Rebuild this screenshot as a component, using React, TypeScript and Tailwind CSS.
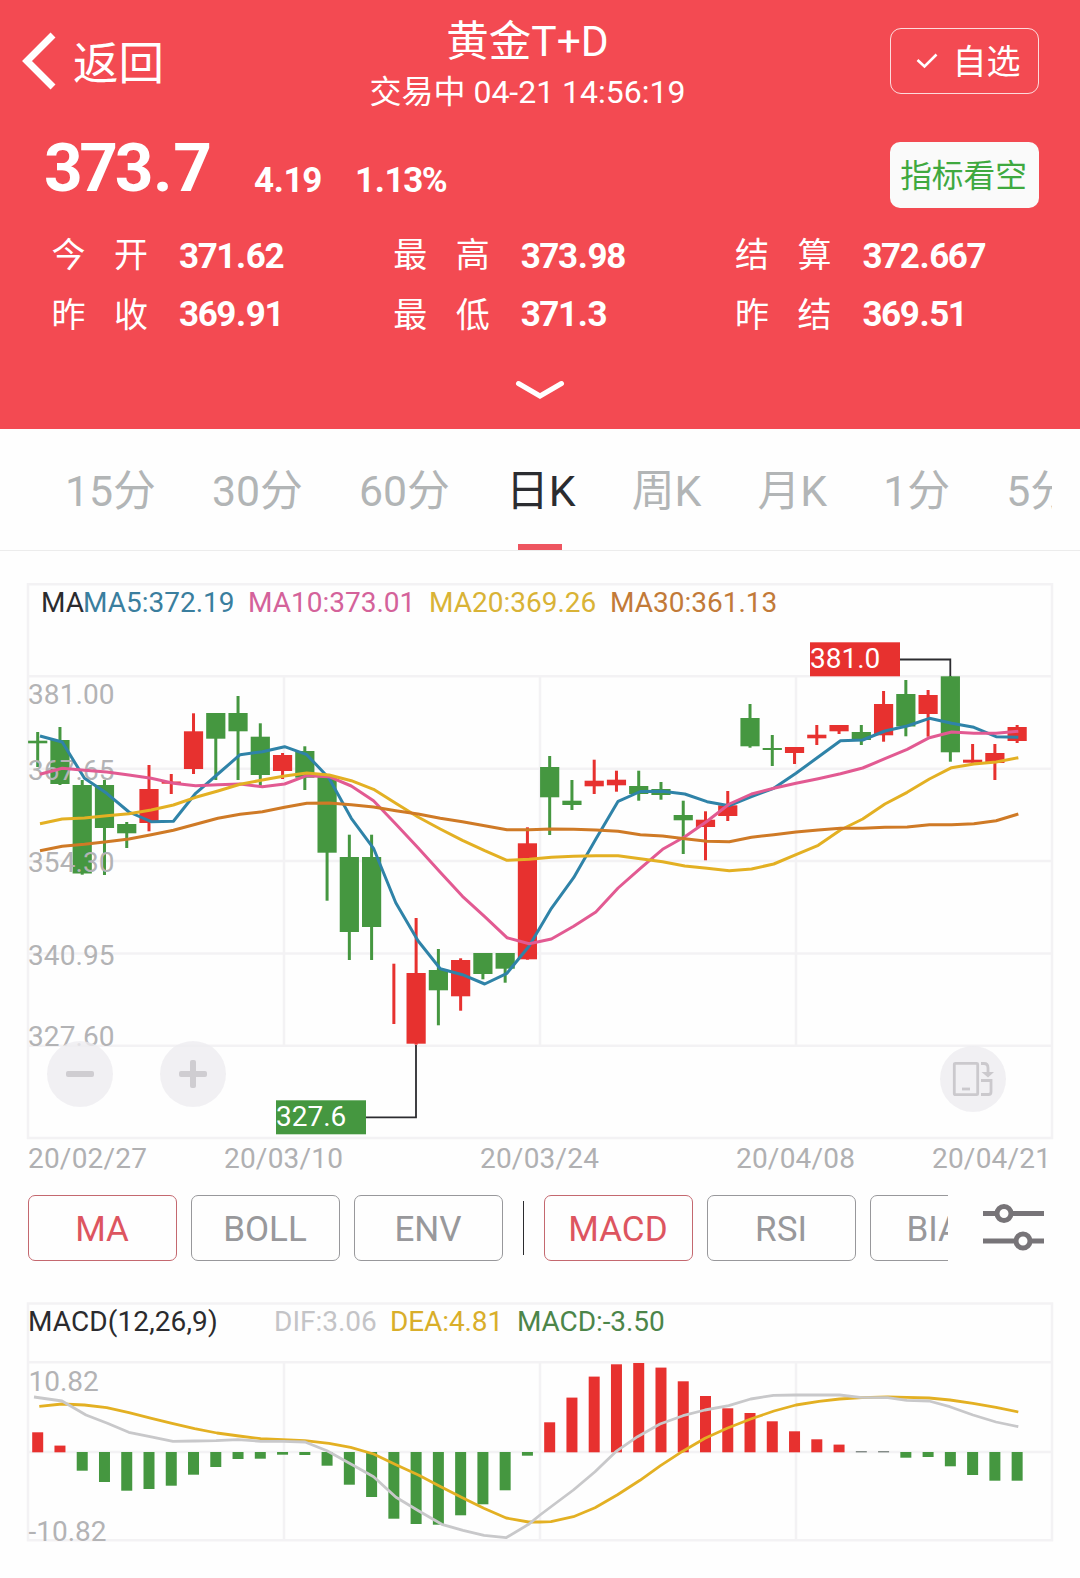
import React from "react";
import clsx from "clsx";

const RED = "#e7312f";
const GREEN = "#459740";

// [up, bodyTop, bodyBottom, wickTop, wickBottom], in chart units
type Candle = [0 | 1, number, number, number, number];

const candles: Candle[] = [
  [0, 740.7, 743.3, 732, 767],
  [0, 740, 784, 727, 785],
  [0, 785, 873.5, 780, 874.7],
  [0, 785, 828, 780, 875],
  [0, 824, 833.3, 822, 848],
  [1, 789, 823, 765, 831.3],
  [1, 781.5, 783.7, 774, 794],
  [1, 731.3, 769, 713.3, 774],
  [0, 713, 738.7, 713, 780],
  [0, 713, 731.3, 696, 780],
  [0, 736.7, 775, 723.3, 786],
  [1, 755, 771, 753, 779],
  [0, 751, 777.7, 746.3, 790],
  [0, 776.7, 852.7, 776.7, 900.7],
  [0, 857, 932, 834.7, 960],
  [0, 857, 927, 834.7, 960],
  [1, 1024, 1024, 963.7, 1024],
  [1, 973, 1043.7, 918, 1044.7],
  [0, 970, 990.3, 949, 1025.3],
  [1, 960, 996.3, 958.3, 1010.7],
  [0, 953, 974, 953, 979.3],
  [0, 953, 968.7, 953, 982.7],
  [1, 843.3, 959.3, 827.3, 959.7],
  [0, 767, 797.3, 756, 835],
  [0, 800.7, 805, 780, 810],
  [1, 780.7, 786.3, 759.7, 794],
  [1, 779.7, 785.3, 770.7, 791.7],
  [0, 786, 794, 770.7, 800.7],
  [0, 789, 795, 782, 799.7],
  [0, 815, 820.3, 800.7, 854],
  [1, 819.7, 827, 811.3, 860.3],
  [1, 805.3, 816, 791, 821],
  [0, 718, 746.3, 704, 747.7],
  [0, 748, 750, 735, 766],
  [1, 747, 753, 747, 764],
  [1, 734.7, 738.3, 725, 745],
  [1, 725, 731.3, 725, 734],
  [0, 732, 740, 725, 745],
  [1, 704, 735.3, 691, 741.7],
  [0, 694, 726.5, 680, 736.3],
  [1, 695, 714, 690, 736.7],
  [0, 676.3, 752.3, 676, 761.7],
  [1, 759.7, 762.7, 744, 762.7],
  [1, 753, 763, 744, 780],
  [1, 727, 741, 725, 743],
];

const ma5 = [
  736, 742, 778.3, 793.3, 812, 821.7, 821.3, 793.3, 774, 754.7, 751.7, 746.7,
  754.7, 778.3, 818.3, 848.3, 902.7, 940.7, 968.7, 974.7, 984, 973.3, 946,
  908.3, 877.7, 839, 801.3, 791.5, 791.3, 794, 801.7, 805.7, 796.7, 788.3,
  773.3, 757, 740.7, 740, 731, 726, 718.3, 723.3, 727.3, 736.7, 737.3,
];
const ma10 = [
  774.3, 768.3, 770.3, 772, 775, 778.3, 783.3, 785.7, 784.7, 784, 786.7, 784,
  775.7, 776.7, 786, 800.7, 824, 847.7, 872.3, 896.3, 916.7, 937.7, 943.7, 939,
  926.3, 912, 888, 868.3, 849.3, 836.7, 821.3, 804, 794, 788.3, 783.3, 778.7,
  773.7, 768, 758.7, 749.3, 737.7, 732, 733.3, 733.3, 731.3,
];
const ma20 = [
  823.7, 819, 818, 815.7, 813.7, 810, 805, 797.3, 791, 784.3, 780, 776, 773,
  775, 780.7, 789.3, 803.3, 817, 829, 840.3, 850.7, 860.3, 859.3, 857.3, 856.3,
  855.7, 855.7, 858.7, 861.7, 866, 868.3, 870.7, 869, 864, 854.7, 845.3, 830,
  819, 804, 792.3, 779, 767.7, 764, 762, 757.7,
];
const ma30 = [
  850.7, 846.3, 844.3, 841.7, 839, 834.7, 830.3, 824.3, 818.3, 814.3, 811.7,
  807.3, 803.3, 803, 804.7, 807, 810.7, 814, 818.3, 821.7, 825.7, 829.7, 829.7,
  829, 829.3, 830, 831.3, 834.7, 836, 838.7, 841.3, 841.7, 837.3, 834.7, 832,
  830, 828.3, 828.3, 827.3, 827, 824.7, 824.7, 823.7, 820.7, 814,
];

// positive grows upwards from the zero line
const macdBars = [
  20, 6.7, -18.7, -30, -38.7, -37, -33.7, -22.7, -15, -7, -6.7, -2.7, -3,
  -13.7, -32.7, -45, -66.7, -72, -72.7, -63.3, -52.3, -38.3, -3.7, 30, 54.7,
  75.7, 88, 89.3, 84.7, 71, 56.3, 44, 39.3, 31, 21, 13, 7.7, 0, 0, -5.7, -5,
  -14.3, -23, -28.7, -28.7,
];

const dif =
  "34,1397 62,1401 86,1415 107.4,1423.3 128.8,1432.3 150,1436.7 173,1441.3 194.6,1441 216,1440.7 238,1439.7 260.7,1441.3 283,1441.3 305,1442 327,1450.7 349.5,1463.3 373.6,1476.7 396,1497.3 418.4,1510.7 441.8,1524.3 463,1530.3 484,1535.3 506,1537.7 528.6,1524.3 540,1515 552,1506 573.4,1490 595,1471.7 615.8,1451.7 637.5,1436.7 660,1424 683,1415.7 705,1410 728.7,1405.7 750.7,1399 773.5,1395.3 796,1395 839.6,1395 860,1397.3 887.8,1397.7 906.7,1400.3 929,1401 949.8,1406.7 973,1415 996,1422 1018.3,1426.7";
const dea =
  "39.3,1406.3 62,1404 84.4,1405 106.7,1407.7 129,1412.7 151.5,1418.3 172,1423.3 194.6,1428.7 217,1433 239,1436 260.7,1438.7 304.8,1440.7 329,1443.3 350.6,1447.3 373.6,1454 396,1464.7 418.4,1475 440.8,1486.7 461.4,1497.3 483.8,1508.3 506.2,1518 528.6,1522 540,1522 551,1521.7 573.4,1516.7 595,1507.7 617.5,1494.7 640,1480.3 660.5,1465.7 682,1451.7 705,1438.3 727.7,1428 750.7,1419 774,1411 796,1405 819,1401.3 839.6,1399 862,1397.7 887.8,1397 906.7,1397.3 929,1398 950,1400 973,1403.3 996,1407.3 1018.3,1412";

const candleX = (i: number) => 37.7 + i * 22.26;
const linePoints = (ys: number[]) =>
  ys.map((y, i) => `${40 + i * 22.235},${y}`).join(" ");

// Price figures: the decimal point gets more room than the font gives it
const Num: React.FC<{ value: string; big?: boolean }> = ({ value, big }) => {
  const [whole, rest] = value.split(".");
  return (
    <span
      className={clsx(
        "font-bold leading-none",
        big ? "text-[67.5px] tracking-[-3.4px]" : "text-[35px] tracking-[-1.4px]"
      )}
    >
      {whole}
      <span className={big ? "ml-[3px] mr-[4px]" : "ml-[1px] mr-[1px]"}>
        .
      </span>
      {rest}
    </span>
  );
};

const quotes = [
  ["今", "开", "371.62"],
  ["最", "高", "373.98"],
  ["结", "算", "372.667"],
  ["昨", "收", "369.91"],
  ["最", "低", "371.3"],
  ["昨", "结", "369.51"],
];

const Header: React.FC = () => (
  <header className="h-[429px] bg-[#f34a52] text-white overflow-hidden">
    <div className="flex h-[125px] items-start">
      <div className="flex w-[340px] pl-[21px] pt-[31px]">
        <svg width="36" height="60" viewBox="0 0 36 60" fill="none">
          <path d="M32 4 L6 30 L32 56" stroke="#fff" strokeWidth="7" />
        </svg>
        <span className="ml-[16px] mt-[11px] text-[45.5px] leading-[46px]">
          返回
        </span>
      </div>
      <div className="flex w-[375px] flex-col items-center pt-[19px]">
        <h1 className="text-[42.5px] leading-[46px]">黄金T+D</h1>
        <p className="mt-[9px] whitespace-nowrap text-[32px] leading-[36px]">
          交易中 04-21 14:56:19
        </p>
      </div>
      <div className="ml-[175px] mt-[28px] flex h-[66px] w-[149px] items-center rounded-[11px] border border-white/80 pl-[25px]">
        <svg width="22" height="16" viewBox="0 0 22 16" fill="none">
          <path d="M1.5 7 L8.5 13.5 L20.5 1.5" stroke="#fff" strokeWidth="2.6" />
        </svg>
        <span className="ml-[14.5px] mt-px text-[34px] leading-none">
          自选
        </span>
      </div>
    </div>
    <div className="flex h-[92px] items-start">
      <div className="flex h-[78px] w-[890px] items-end pl-[44px]">
        <div className="mb-[2px] flex w-[210px]">
          <Num value="373.7" big />
        </div>
        <div className="mb-[5px] flex w-[101px]">
          <Num value="4.19" />
        </div>
        <div className="mb-[5px] flex">
          <Num value="1.13%" />
        </div>
      </div>
      <div className="mt-[17px] flex h-[66px] w-[149px] items-center justify-center rounded-[10px] bg-[#fafafa] pr-[2px] pt-[4px] text-[31.7px] leading-none text-[#3fa93f]">
        指标看空
      </div>
    </div>
    <div className="grid grid-cols-[341.7px_341.7px_341.7px] gap-y-[18px] pl-[51.5px] pt-[17px]">
      {quotes.map(([a, b, value], i) => (
        <div key={i} className="flex h-[42px] items-center text-[34px]">
          <span className="w-[62.5px] leading-none">{a}</span>
          <span className="w-[65px] leading-none">{b}</span>
          <span className={clsx("flex", i < 3 ? "pt-[2px]" : "pb-[2px]")}>
            <Num value={value} />
          </span>
        </div>
      ))}
    </div>
    <div className="flex justify-center pt-[44px]">
      <svg width="50" height="22" viewBox="0 0 50 22" fill="none">
        <path
          d="M3.5 3.5 L25 16 L46.5 3.5"
          stroke="#fff"
          strokeWidth="5"
          strokeLinecap="round"
        />
      </svg>
    </div>
  </header>
);

const tabs = ["15分", "30分", "60分", "日K", "周K", "月K", "1分", "5分"];

const Tabs: React.FC = () => (
  <nav className="h-[122px] border-b border-[#ececec] pr-[28px]">
    <div className="flex h-full gap-[56.1px] overflow-hidden pl-[65px] text-[42.8px] text-[#b2b5b6]">
      {tabs.map((tab) => (
        <div
          key={tab}
          className={clsx(
            "flex h-full shrink-0 flex-col items-center",
            tab === "日K" && "text-[#2b2c30]"
          )}
        >
          <span className="mt-[37px] h-[50px] leading-[50px]">{tab}</span>
          {tab === "日K" && (
            <span className="mr-[2px] mt-[28px] h-[6px] w-[44px] bg-[#ee5560]" />
          )}
        </div>
      ))}
    </div>
  </nav>
);

const PriceChart: React.FC = () => (
  <svg
    width="1080"
    height="557"
    viewBox="0 583 1080 557"
    fill="none"
    fontSize="28"
    className="block"
  >
    <g stroke="#f3f2f4" strokeWidth="2.5">
      <rect x="28" y="584.3" width="1024" height="553.7" />
      {[676.3, 768.7, 861, 953.5, 1045.7].map((y) => (
        <path key={y} d={`M28 ${y} H1052`} />
      ))}
      {[284, 540, 796].map((x) => (
        <path key={x} d={`M${x} 676 V1045.7`} />
      ))}
    </g>
    {candles.map(([up, top, bottom, high, low], i) => {
      const x = candleX(i);
      const fill = up ? RED : GREEN;
      return (
        <g key={i} fill={fill}>
          <rect x={x - 1.5} y={high} width="3" height={low - high} />
          <rect x={x - 9.6} y={top} width="19.2" height={bottom - top} />
        </g>
      );
    })}
    <g fill="#b3b3b5" letterSpacing="0.1">
      <text x="28" y="704">381.00</text>
      <text x="28" y="780">367.65</text>
      <text x="28" y="872">354.30</text>
      <text x="28" y="965">340.95</text>
      <text x="28" y="1046">327.60</text>
    </g>
    <g strokeWidth="3" strokeLinejoin="round">
      <polyline points={linePoints(ma5)} stroke="#2f83a8" />
      <polyline points={linePoints(ma10)} stroke="#e25a92" />
      <polyline points={linePoints(ma20)} stroke="#e3b023" />
      <polyline points={linePoints(ma30)} stroke="#cf7a26" />
    </g>
    <path d="M900 659.5 H950.3 V676" stroke="#2c2c30" strokeWidth="1.8" />
    <rect x="810" y="642.3" width="90" height="34" fill={RED} />
    <text x="810" y="668" fill="#fff">381.0</text>
    <path d="M366 1117.3 H416 V1045" stroke="#2c2c30" strokeWidth="1.8" />
    <rect x="276" y="1100.3" width="90" height="34" fill={GREEN} />
    <text x="276" y="1126" fill="#fff">327.6</text>
  </svg>
);

const roundButton =
  "absolute flex size-[66px] items-center justify-center rounded-full bg-[#eeecf0]/80";

const ChartPanel: React.FC = () => (
  <section className="relative mt-[32px]">
    <PriceChart />
    <div className="absolute left-[41px] top-[4px] flex text-[28px] leading-[32px]">
      <span className="w-[42px] text-[#2b2b2e]">MA</span>
      <span className="w-[165px] text-[#3a7e9e]">MA5:372.19</span>
      <span className="w-[181px] text-[#d4629a]">MA10:373.01</span>
      <span className="w-[181px] text-[#d9b336]">MA20:369.26</span>
      <span className="text-[#c27a38]">MA30:361.13</span>
    </div>
    <button className={clsx(roundButton, "left-[47px] top-[458px]")}>
      <svg width="28" height="28" viewBox="0 0 28 28">
        <rect y="11" width="28" height="6" rx="2" fill="#cfcdd1" />
      </svg>
    </button>
    <button className={clsx(roundButton, "left-[160px] top-[458px]")}>
      <svg width="28" height="28" viewBox="0 0 28 28" fill="#cfcdd1">
        <rect y="11" width="28" height="6" rx="2" />
        <rect x="11" width="6" height="28" rx="2" />
      </svg>
    </button>
    <button className={clsx(roundButton, "left-[940px] top-[463px]")}>
      <svg width="42" height="36" viewBox="0 0 42 36" fill="none">
        <g stroke="#cbc9cd" strokeWidth="2.8">
          <rect x="2.3" y="2.3" width="23.4" height="31.4" rx="1" />
          <path d="M10 28 H18" />
          <path d="M29 2.5 H32 Q36 2.5 36 7 V12" />
          <path d="M29 19.5 H39 V31 Q39 33.5 36.5 33.5 H29" />
        </g>
        <path d="M29.5 11 H42 L36 16.5 Z" fill="#cbc9cd" />
      </svg>
    </button>
    <div className="flex h-[55px] pl-[28px] pt-[2px] text-[28px] leading-[34px] tracking-[0.2px] text-[#b0b0b2]">
      <span className="w-[196px]">20/02/27</span>
      <span className="w-[256px]">20/03/10</span>
      <span className="w-[256px]">20/03/24</span>
      <span className="w-[196px]">20/04/08</span>
      <span>20/04/21</span>
    </div>
  </section>
);

const Chip: React.FC<{ label: string; active?: boolean }> = ({
  label,
  active,
}) => (
  <button
    className={clsx(
      "h-[66px] w-[149px] shrink-0 rounded-[7px] border pr-px pt-[2px] text-[35px] leading-none",
      active
        ? "border-[#c4686f] text-[#dd5560]"
        : "border-[#98989b] text-[#98989b]"
    )}
  >
    {label}
  </button>
);

const IndicatorBar: React.FC = () => (
  <div className="flex h-[66px] items-center">
    <div className="ml-[28px] flex w-[920px] items-center gap-[14px] overflow-hidden">
      <Chip label="MA" active />
      <Chip label="BOLL" />
      <Chip label="ENV" />
      <span className="mx-[6px] h-[54px] w-px shrink-0 bg-[#2b2b2e]" />
      <Chip label="MACD" active />
      <Chip label="RSI" />
      <Chip label="BIAS" />
    </div>
    <svg
      width="61"
      height="50"
      viewBox="0 0 61 50"
      fill="none"
      stroke="#777478"
      strokeWidth="5"
      className="ml-[35px]"
    >
      <path d="M0 10.5 H14 M28 10.5 H61" />
      <circle cx="21" cy="10.5" r="7" />
      <path d="M0 38 H33 M47 38 H61" />
      <circle cx="40" cy="38" r="7" />
    </svg>
  </div>
);

const MacdPanel: React.FC = () => (
  <section className="relative mt-[41px]">
    <svg
      width="1080"
      height="240"
      viewBox="0 1302 1080 240"
      fill="none"
      fontSize="28"
      className="block"
    >
      <g stroke="#f3f2f4" strokeWidth="2.5">
        <rect x="28" y="1303.5" width="1024" height="236.7" />
        <path d="M28 1362.3 H1052 M28 1452 H1052" />
        <path d="M284 1362 V1540 M540 1362 V1540 M796 1362 V1540" />
      </g>
      {macdBars.map((v, i) => (
        <rect
          key={i}
          x={candleX(i) - 5.5}
          y={v === 0 ? 1451.3 : v > 0 ? 1452.3 - v : 1452}
          width="11"
          height={Math.abs(v) || 1}
          fill={v === 0 ? "#55605a" : v > 0 ? RED : GREEN}
        />
      ))}
      <g fill="#b3b3b5">
        <text x="28.5" y="1391">10.82</text>
        <text x="28.5" y="1541">-10.82</text>
      </g>
      <g strokeWidth="2.8" strokeLinejoin="round">
        <polyline points={dea} stroke="#e3b023" />
        <polyline points={dif} stroke="#c8c8ca" />
      </g>
    </svg>
    <div className="absolute left-[28px] top-[4px] flex text-[28px] leading-[32px]">
      <span className="w-[246px] tracking-[0.1px] text-[#2b2b2e]">
        MACD(12,26,9)
      </span>
      <span className="w-[116px] text-[#c4c4c7]">DIF:3.06</span>
      <span className="w-[127px] tracking-[-0.1px] text-[#d9ae2a]">
        DEA:4.81
      </span>
      <span className="tracking-[-0.1px] text-[#4c8549]">MACD:-3.50</span>
    </div>
  </section>
);

export default function App() {
  return (
    <main className="h-[1578px] w-[1080px] overflow-hidden bg-[#fefefe] font-['Roboto','Noto_Sans_CJK_SC',sans-serif]">
      <Header />
      <Tabs />
      <ChartPanel />
      <IndicatorBar />
      <MacdPanel />
    </main>
  );
}
